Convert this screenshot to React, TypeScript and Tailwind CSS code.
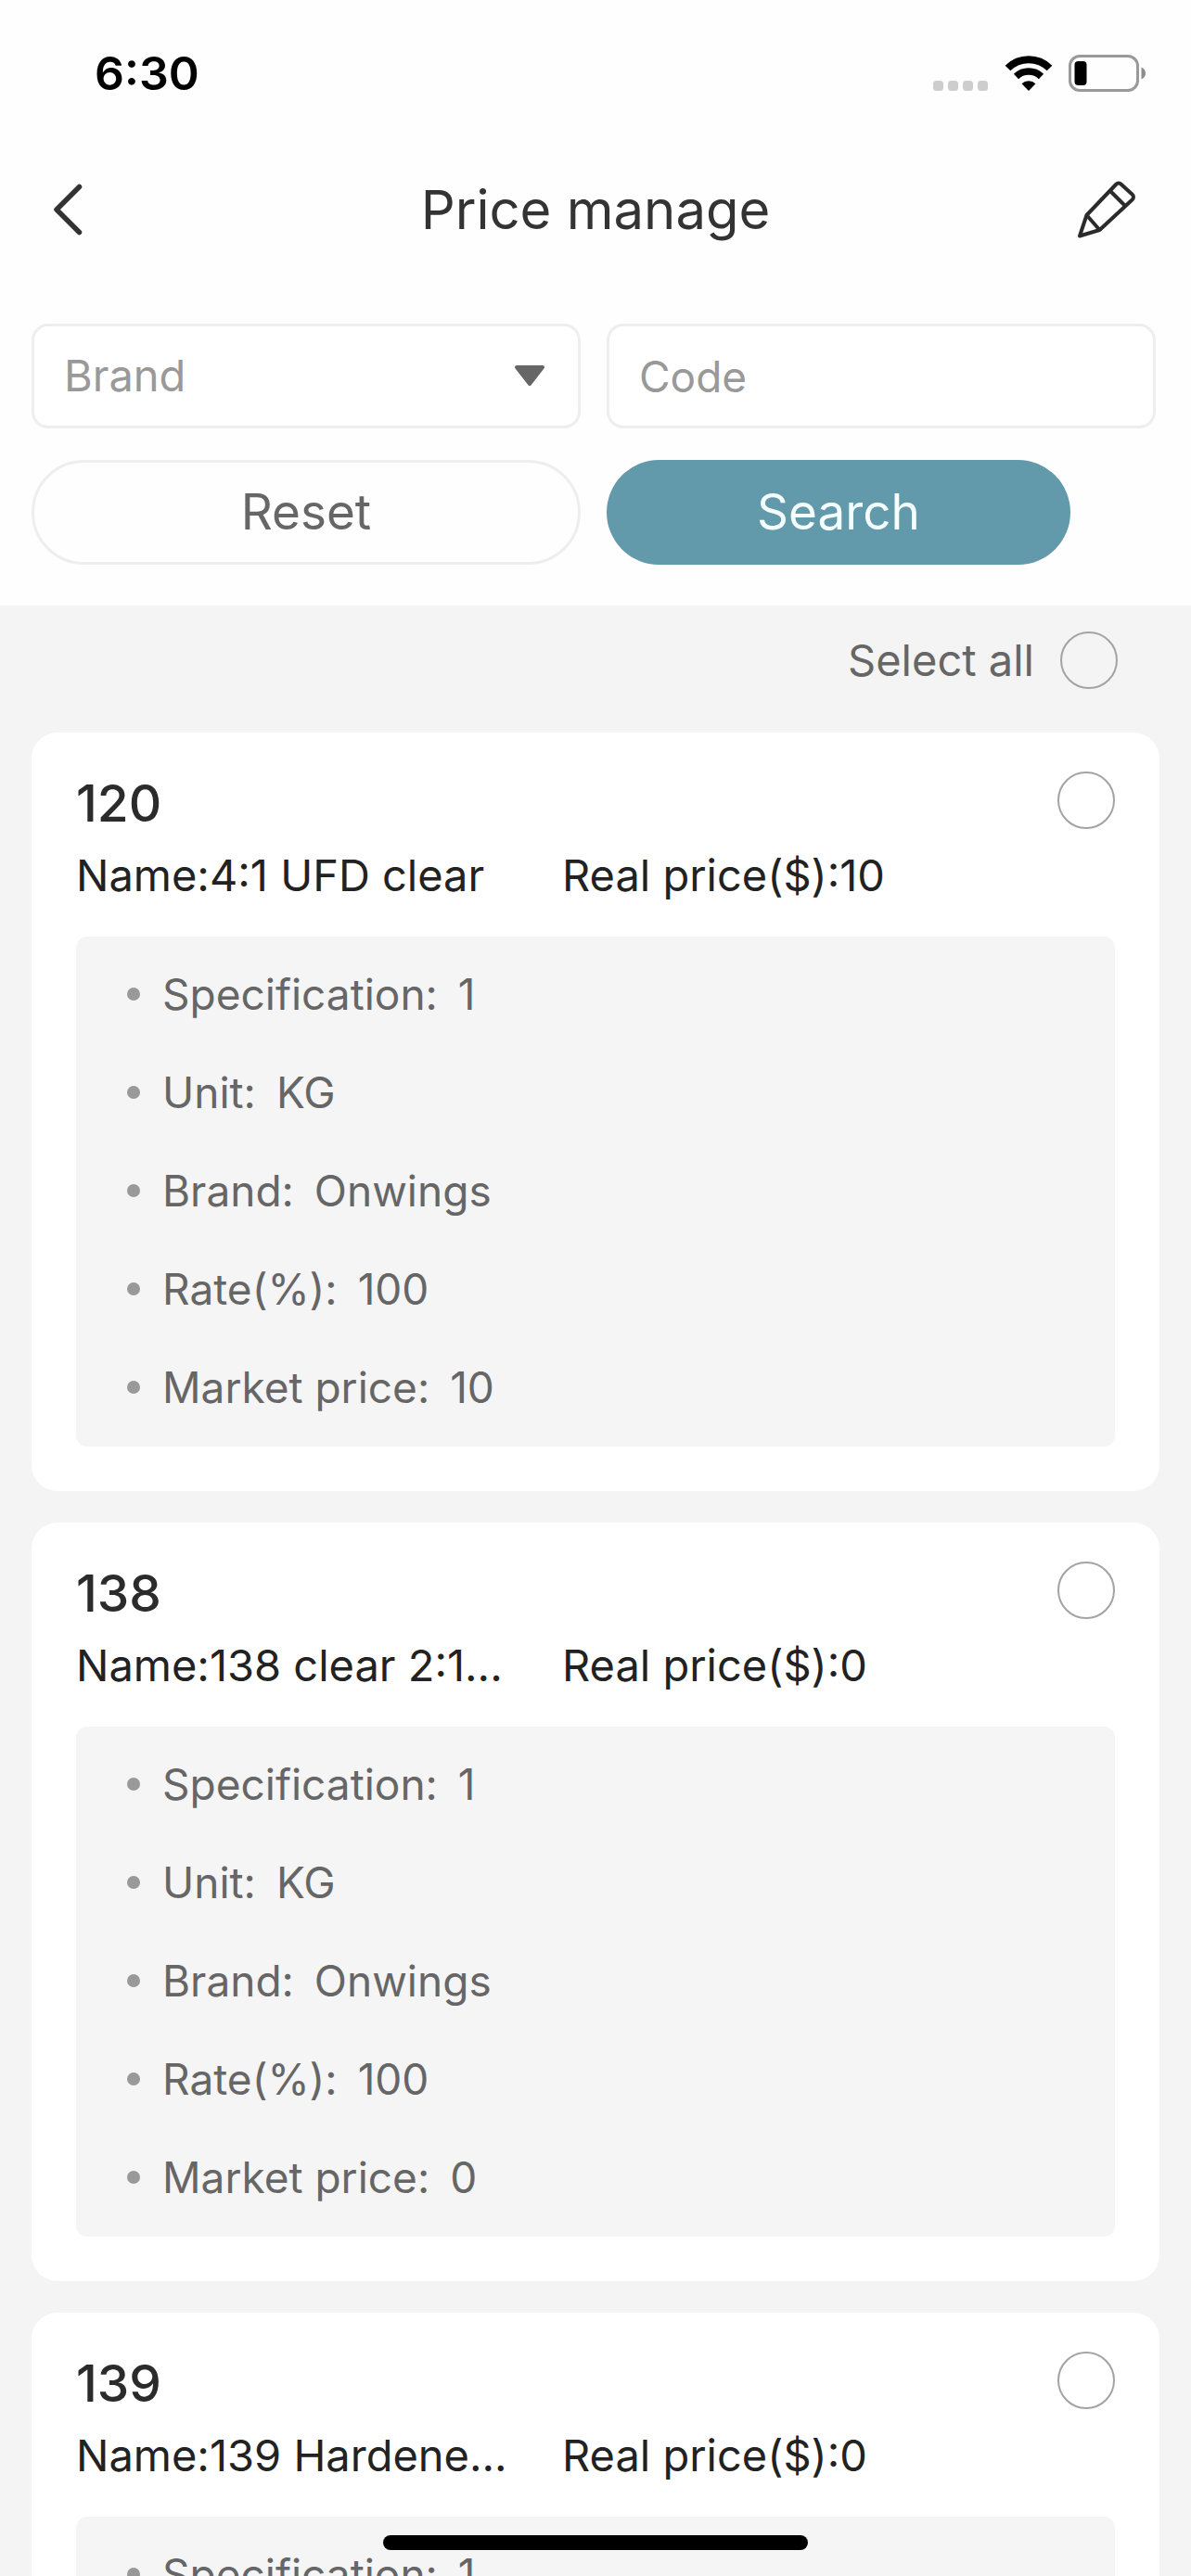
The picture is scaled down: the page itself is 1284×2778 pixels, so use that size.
import { useState } from 'react'

const items = [
  { code: '120', name: '4:1 UFD clear', realPrice: 10, specification: '1', unit: 'KG', brand: 'Onwings', rate: 100, marketPrice: 10 },
  { code: '138', name: '138 clear 2:1...', realPrice: 0, specification: '1', unit: 'KG', brand: 'Onwings', rate: 100, marketPrice: 0 },
  { code: '139', name: '139 Hardene...', realPrice: 0, specification: '1', unit: 'KG', brand: 'Onwings', rate: 100, marketPrice: 0 },
]

type Item = (typeof items)[number]

const radioClass =
  'size-[62px] shrink-0 appearance-none rounded-full border-2 border-[#a3a3a3] bg-transparent checked:border-[#6299ab] checked:bg-[#6299ab]'

function StatusBar() {
  return (
    <div className="flex h-[158px] items-center justify-between pr-12 pl-[102px]">
      <span className="text-[50px] leading-none font-semibold text-black">6:30</span>
      <div className="flex items-center gap-[17px]">
        <svg width="60" height="40" viewBox="0 0 60 40" fill="#cdcdcd">
          <rect x="0" y="28" width="11" height="11" rx="3.5" />
          <rect x="16" y="28" width="11" height="11" rx="3.5" />
          <rect x="32" y="28" width="11" height="11" rx="3.5" />
          <rect x="48" y="28" width="11" height="11" rx="3.5" />
        </svg>
        <svg width="52" height="40" viewBox="0 0 52 40" fill="none" stroke="#000">
          <path d="M3.5 14.5a32 32 0 0 1 45 0" strokeWidth="8" />
          <path d="M12.5 23.5a19.5 19.5 0 0 1 27 0" strokeWidth="7.5" />
          <path d="M26 39l-7.5-7.8a11 11 0 0 1 15 0z" fill="#000" stroke="none" />
        </svg>
        <svg width="84" height="40" viewBox="0 0 84 40" fill="none">
          <rect x="1.5" y="1.5" width="73" height="37" rx="10.5" stroke="#999" strokeWidth="3" />
          <rect x="6.5" y="7" width="13" height="26" rx="4" fill="#000" />
          <path d="M78.5 13.5c6 2.5 6 10.5 0 13z" fill="#8c8c8c" />
        </svg>
      </div>
    </div>
  )
}

function NavBar() {
  return (
    <header className="flex h-[136px] items-center justify-between px-[58px]">
      <button type="button" aria-label="Back" className="w-16">
        <svg width="36" height="56" viewBox="4 0 36 56" fill="none" stroke="#333" strokeWidth="5.5" strokeLinecap="round" strokeLinejoin="round">
          <path d="M31.5 3.5L7 28l24.5 24.5" />
        </svg>
      </button>
      <h1 className="text-[58px] leading-none text-[#333]">Price manage</h1>
      <button type="button" aria-label="Edit" className="w-16">
        <svg width="64" height="64" viewBox="0 0 64 64" fill="none" stroke="#2b2b2b" strokeWidth="4" strokeLinejoin="round">
          <path d="M2 60.5L9.5 38 41 5q3-3 6 0l11.500 10.500q3 3 0 6L23.500 54z" />
          <path d="M9.5 38L23.500 54M34.500 11.500L51 28" />
        </svg>
      </button>
    </header>
  )
}

function Filters() {
  return (
    <form className="grid grid-cols-2 gap-x-7 gap-y-[34px] pt-[55px] pr-[38px] pb-11 pl-[34px]" onSubmit={(e) => e.preventDefault()}>
      <div className="relative">
        <select
          aria-label="Brand"
          defaultValue=""
          className="h-[113px] w-full appearance-none rounded-[18px] border-3 border-[#eee] bg-white px-8 text-[47px] text-[#999]"
        >
          <option value="">Brand</option>
          <option value="onwings">Onwings</option>
        </select>
        <svg className="pointer-events-none absolute top-11 right-[38px]" width="34" height="25" viewBox="0 0 34 25">
          <path d="M3 3h28L17 21z" fill="#666" stroke="#666" strokeWidth="4" strokeLinejoin="round" />
        </svg>
      </div>
      <input
        type="text"
        aria-label="Code"
        placeholder="Code"
        className="h-[113px] w-full rounded-[18px] border-3 border-[#eee] bg-white px-8 text-[46px] text-[#333] placeholder:text-[#999]"
      />
      <button type="reset" className="h-[113px] rounded-full border-3 border-[#eee] text-[53px] text-[#666]">
        Reset
      </button>
      <button type="submit" className="h-[113px] w-[500px] rounded-full bg-[#6299ab] text-[53px] text-[#f4fdff]">
        Search
      </button>
    </form>
  )
}

function Detail({ label, value }: { label: string; value: string | number }) {
  return (
    <li className="flex h-[106px] items-center text-[46px] text-[#666]">
      <span className="mr-6 size-[14px] rounded-full bg-[#999]" />
      <span className="mr-[22px]">{label}:</span>
      <span>{value}</span>
    </li>
  )
}

function PriceCard({ item, checked, onToggle }: { item: Item; checked: boolean; onToggle: () => void }) {
  return (
    <article className="rounded-[28px] bg-white px-12 pt-[42px] pb-12">
      <div className="flex items-start justify-between">
        <h2 className="text-[55px] leading-[68px] font-medium text-[#2b2b2b]">{item.code}</h2>
        <input type="checkbox" aria-label={`Select ${item.code}`} checked={checked} onChange={onToggle} className={radioClass} />
      </div>
      <div className="mt-[13px] mb-[35px] flex text-[47px] leading-[62px] text-[#222]">
        <p className="mr-12 w-[476px] shrink-0 whitespace-nowrap">Name:{item.name}</p>
        <p>Real price($):{item.realPrice}</p>
      </div>
      <ul className="rounded-xl bg-[#f5f5f5] pt-[9px] pb-[11px] pl-[55px]">
        <Detail label="Specification" value={item.specification} />
        <Detail label="Unit" value={item.unit} />
        <Detail label="Brand" value={item.brand} />
        <Detail label="Rate(%)" value={item.rate} />
        <Detail label="Market price" value={item.marketPrice} />
      </ul>
    </article>
  )
}

export default function App() {
  const [selected, setSelected] = useState<string[]>([])
  const allSelected = selected.length === items.length

  const toggle = (code: string) =>
    setSelected((prev) => (prev.includes(code) ? prev.filter((c) => c !== code) : [...prev, code]))

  return (
    <div className="flex h-screen flex-col overflow-hidden bg-[#f4f4f4] font-['Inter',sans-serif]">
      <div className="shrink-0 bg-[#fefefe]">
        <StatusBar />
        <NavBar />
        <Filters />
      </div>

      <main className="min-h-0 flex-1 overflow-y-auto [scrollbar-width:none]">
        <label className="flex items-center justify-end gap-7 pt-7 pr-[79px] pb-[47px] text-[47px] leading-[62px] text-[#666]">
          Select all
          <input
            type="checkbox"
            checked={allSelected}
            onChange={() => setSelected(allSelected ? [] : items.map((i) => i.code))}
            className={radioClass}
          />
        </label>
        <div className="flex flex-col gap-[34px] px-[34px] pb-24">
          {items.map((item) => (
            <PriceCard key={item.code} item={item} checked={selected.includes(item.code)} onToggle={() => toggle(item.code)} />
          ))}
        </div>
      </main>

      {/* Home indicator */}
      <div className="fixed bottom-7 left-1/2 h-4 w-[458px] -translate-x-1/2 rounded-full bg-black" />
    </div>
  )
}
